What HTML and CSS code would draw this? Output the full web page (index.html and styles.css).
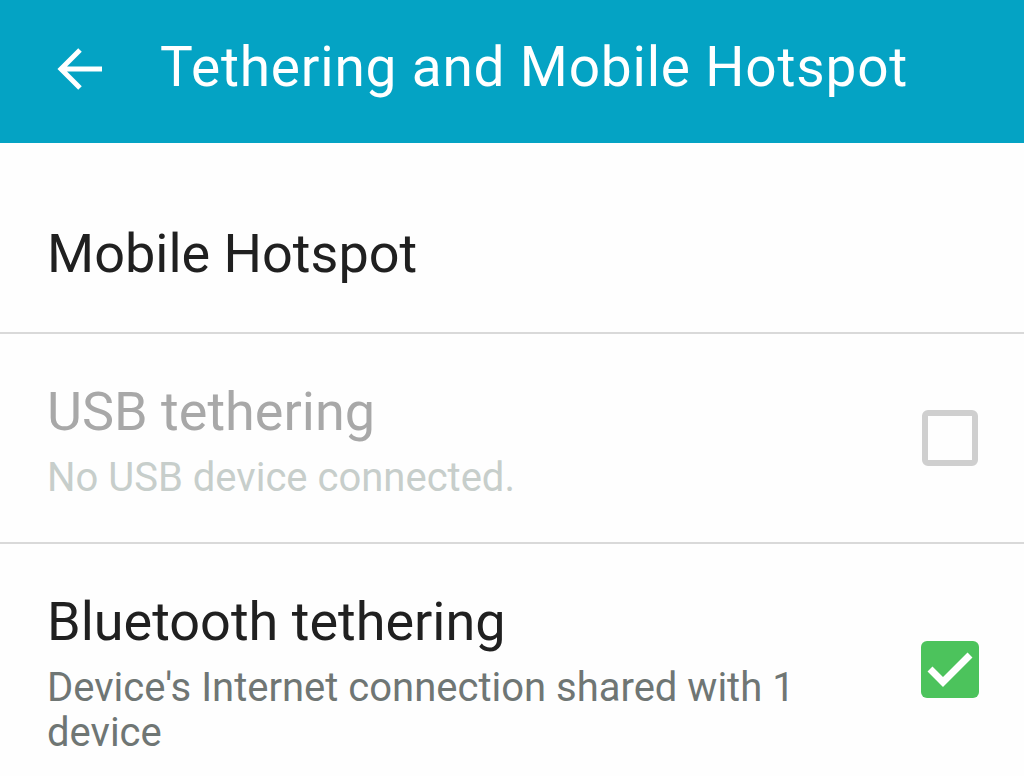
FILE: index.html
```html
<!DOCTYPE html>
<html>
<head>
<meta charset="utf-8">
<link rel="stylesheet" href="styles.css">
</head>
<body>
<header class="appbar">
  <svg class="back" width="50" height="50" viewBox="0 0 50 50">
    <path d="M47 25H7M25 6L6 25l19 19" fill="none" stroke="#fff" stroke-width="5" stroke-linecap="butt" stroke-linejoin="miter"/>
  </svg>
  <h1 class="title">Tethering and Mobile Hotspot</h1>
</header>
<main class="list">
  <div class="row row-single">
    <div class="row-title">Mobile Hotspot</div>
  </div>
  <div class="row row-double disabled">
    <div class="text">
      <div class="row-title">USB tethering</div>
      <div class="row-sub">No USB device connected.</div>
    </div>
    <span class="check"></span>
  </div>
  <div class="row row-double">
    <div class="text">
      <div class="row-title">Bluetooth tethering</div>
      <div class="row-sub">Device's Internet connection shared with 1 device</div>
    </div>
    <span class="check checked">
      <svg width="58" height="57" viewBox="0 0 58 57"><path d="M9 28l13 13L49 14" fill="none" stroke="#fff" stroke-width="7"/></svg>
    </span>
  </div>
</main>
</body>
</html>
```
FILE: styles.css
```css
html, body {
  margin: 0;
  padding: 0;
  background: #fefefe;
  font-family: Roboto, "Noto Sans", sans-serif;
  overflow: hidden;
}
.appbar {
  height: 143px;
  background: #04a3c4;
  display: flex;
  align-items: center;
  padding-left: 55px;
  box-sizing: border-box;
}
.back {
  flex: none;
  margin-top: -6px;
}
.title {
  margin: -10px 0 0 55px;
  color: #fff;
  font-weight: 400;
  font-size: 55px;
  letter-spacing: 0.8px;
  line-height: 62px;
}
.list {
  display: flex;
  flex-direction: column;
}
.row {
  display: flex;
  align-items: center;
  justify-content: space-between;
  padding: 0 45px 0 47px;
  border-bottom: 2px solid #d9d9d9;
}
.row:last-child { border-bottom: none; }
.row-single {
  height: 191px;
  align-items: flex-start;
  padding-top: 80px;
  box-sizing: border-box;
}
.row-double {
  padding-top: 47px;
  padding-bottom: 42px;
}
.text {
  flex: 1;
  max-width: 790px;
}
.row-title {
  font-size: 54px;
  line-height: 62px;
  color: #202020;
}
.row-sub {
  margin-top: 12px;
  font-size: 40px;
  line-height: 45px;
  color: #6f7674;
}
.disabled .row-title { color: #a8a8a8; }
.disabled .row-sub { color: #c7cecb; }
.check {
  flex: none;
  width: 56px;
  height: 56px;
  box-sizing: border-box;
  border: 6px solid #cfcfcf;
  border-radius: 6px;
  margin-top: -6px;
  margin-right: 1px;
}
.check.checked {
  width: 58px;
  height: 57px;
  border: none;
  background: #4cc35c;
  margin-top: -8px;
  margin-right: 0;
}
.check svg { display: block; }
```
